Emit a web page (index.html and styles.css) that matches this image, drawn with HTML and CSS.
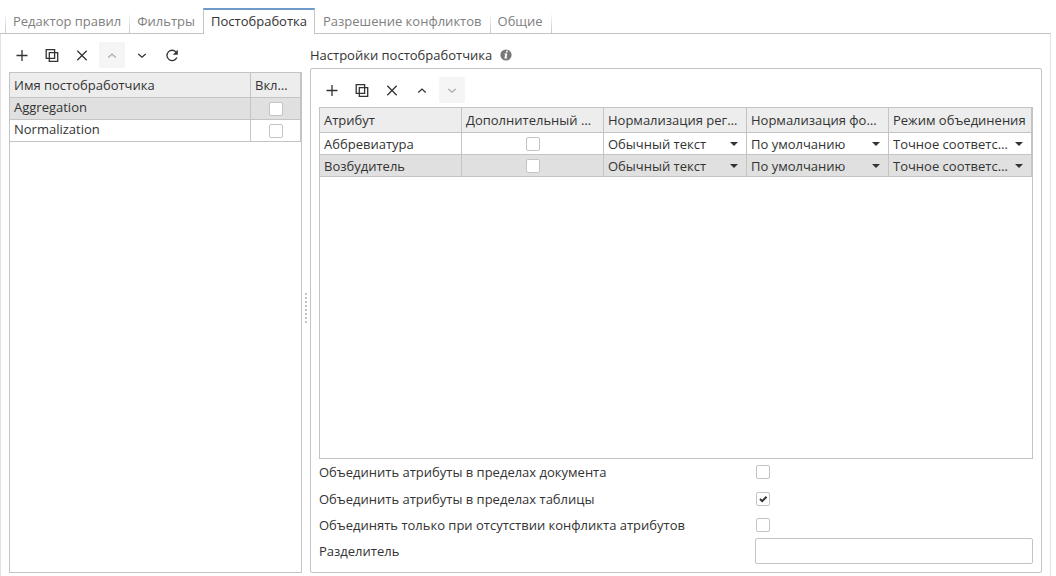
FILE: index.html
```html
<!DOCTYPE html>
<html lang="ru">
<head>
<meta charset="utf-8">
<title>Постобработка</title>
<link rel="stylesheet" href="styles.css">
</head>
<body>
<svg class="sprite" aria-hidden="true">
  <symbol id="plus" viewBox="0 0 16 16"><path d="M8 3v11M2.500 8.500h11"/></symbol>
  <symbol id="copy" viewBox="0 0 16 16"><path d="M2.200 2.700h8.400v8.600H2.200zM5.300 5.700h8.400v8.600H5.300z"/></symbol>
  <symbol id="cross" viewBox="0 0 16 16"><path d="M3.300 3.800l9.400 9.400M12.700 3.800l-9.400 9.400"/></symbol>
  <symbol id="up" viewBox="0 0 16 16"><path d="M4.300 10.400L8 7.100l3.700 3.300"/></symbol>
  <symbol id="down" viewBox="0 0 16 16"><path d="M4.300 6.900L8 10.200l3.700-3.300"/></symbol>
  <symbol id="refresh" viewBox="0 0 16 16"><path d="M12.900 10.600A5.200 5.200 0 1 1 12.300 5.300"/><path class="solid" d="M13.800 2.700v5.100H8.800z"/></symbol>
</svg>
<div class="page">
  <div class="tabs" role="tablist">
    <button class="tab" role="tab">Редактор правил</button>
    <button class="tab" role="tab">Фильтры</button>
    <button class="tab active" role="tab" aria-selected="true">Постобработка</button>
    <button class="tab" role="tab">Разрешение конфликтов</button>
    <button class="tab" role="tab">Общие</button>
  </div>
  <main class="panel">
    <section class="list">
      <div class="toolbar">
        <button class="tool" aria-label="Добавить"><svg><use href="#plus"/></svg></button>
        <button class="tool" aria-label="Копировать"><svg><use href="#copy"/></svg></button>
        <button class="tool" aria-label="Удалить"><svg><use href="#cross"/></svg></button>
        <button class="tool" aria-label="Вверх" disabled><svg><use href="#up"/></svg></button>
        <button class="tool" aria-label="Вниз"><svg><use href="#down"/></svg></button>
        <button class="tool" aria-label="Обновить"><svg><use href="#refresh"/></svg></button>
      </div>
      <div class="grid">
        <table>
          <colgroup><col><col class="col-flag"></colgroup>
          <thead><tr><th>Имя постобработчика</th><th>Включен</th></tr></thead>
          <tbody>
            <tr class="selected"><td class="raised">Aggregation</td><td class="check"><input type="checkbox" aria-label="Aggregation"></td></tr>
            <tr><td class="raised">Normalization</td><td class="check"><input type="checkbox" aria-label="Normalization"></td></tr>
          </tbody>
        </table>
      </div>
    </section>
    <div class="splitter" role="separator"><i></i></div>
    <section class="settings">
      <h2 class="title">Настройки постобработчика
        <svg class="info" viewBox="0 0 12 12"><circle cx="6" cy="6" r="5.600"/><path d="M6.200 1.800h1.600L7.500 3.400H5.900zM4.600 4.600h2.700L6.500 8.500h.8l-.2 1H4.400l.8-3.900h-.8z"/></svg>
      </h2>
      <div class="box">
        <div class="toolbar">
          <button class="tool" aria-label="Добавить"><svg><use href="#plus"/></svg></button>
          <button class="tool" aria-label="Копировать"><svg><use href="#copy"/></svg></button>
          <button class="tool" aria-label="Удалить"><svg><use href="#cross"/></svg></button>
          <button class="tool" aria-label="Вверх"><svg><use href="#up"/></svg></button>
          <button class="tool" aria-label="Вниз" disabled><svg><use href="#down"/></svg></button>
        </div>
        <div class="grid">
          <table>
            <colgroup><col class="col-a"><col class="col-a"><col class="col-b"><col class="col-a"><col class="col-b"></colgroup>
            <thead><tr><th>Атрибут</th><th class="roomy">Дополнительный атрибут</th><th>Нормализация регистра</th><th>Нормализация формы</th><th>Режим объединения</th></tr></thead>
            <tbody>
              <tr>
                <td>Аббревиатура</td>
                <td class="check"><input type="checkbox" aria-label="Дополнительный атрибут"></td>
                <td class="pick"><select aria-label="Нормализация регистра"><option>Обычный текст</option></select></td>
                <td class="pick"><select aria-label="Нормализация формы"><option>По умолчанию</option></select></td>
                <td class="pick"><select aria-label="Режим объединения"><option>Точное соответствие</option></select></td>
              </tr>
              <tr class="selected">
                <td>Возбудитель</td>
                <td class="check"><input type="checkbox" aria-label="Дополнительный атрибут"></td>
                <td class="pick"><select aria-label="Нормализация регистра"><option>Обычный текст</option></select></td>
                <td class="pick"><select aria-label="Нормализация формы"><option>По умолчанию</option></select></td>
                <td class="pick"><select aria-label="Режим объединения"><option>Точное соответствие</option></select></td>
              </tr>
            </tbody>
          </table>
        </div>
        <form class="form">
          <label for="doc">Объединить атрибуты в пределах документа</label><input type="checkbox" id="doc">
          <label for="tbl">Объединить атрибуты в пределах таблицы</label><input type="checkbox" id="tbl" checked>
          <label for="conf">Объединять только при отсутствии конфликта атрибутов</label><input type="checkbox" id="conf">
          <label for="sep">Разделитель</label><input type="text" id="sep">
        </form>
      </div>
    </section>
  </main>
</div>
</body>
</html>
```
FILE: styles.css
```css
* { box-sizing: border-box; }

body {
  margin: 0;
  background: #fff;
  color: #333;
  font: 13px/18px "Open Sans", "Noto Sans", sans-serif;
}

button, input, select { font: inherit; color: inherit; margin: 0; }

.sprite { position: absolute; width: 0; height: 0; }

.page {
  display: flex;
  flex-direction: column;
  height: 100vh;
  padding: 8px 5px 0 0;
}

/* Tabs */
.tabs {
  display: flex;
  height: 26px;
  padding-left: 5px;
  border-bottom: 1px solid #c4c4c4;
}
.tab {
  height: 25px;
  padding: 0 8px 0 7px;
  border: 0;
  border-left: 1px solid;
  border-image: linear-gradient(#fff 20%, #c4c4c4) 1;
  background: none;
  color: #808080;
}
.tab:last-child { border-right: 1px solid; }
.tab.active {
  height: 26px;
  padding: 0 7px 2px;
  border: solid #c4c4c4;
  border-width: 2px 1px 0;
  border-top-color: #6f9bcb;
  border-image: none;
  background: #fff;
  color: #333;
}
.tab.active + .tab { border-left: 0; padding-left: 8px; }

/* Panel */
.panel {
  flex: 1;
  min-height: 0;
  display: flex;
  padding: 8px 8px 3px;
  border: solid #e2e2e2;
  border-width: 0 1px;
}
.list {
  width: 293px;
  display: flex;
  flex-direction: column;
  gap: 4px;
}
.settings {
  flex: 1;
  min-width: 0;
  display: flex;
  flex-direction: column;
}
.title {
  display: flex;
  align-items: center;
  gap: 8px;
  height: 26px;
  margin: 0;
  font-size: 13px;
  font-weight: 400;
}
.info { width: 12px; height: 12px; }
.info circle { fill: #777; }
.info path { fill: #fff; }

.splitter {
  width: 8px;
  display: flex;
  align-items: center;
  justify-content: center;
}
.splitter i {
  width: 2px;
  height: 30px;
  background: repeating-linear-gradient(#c4c4c4 0 2px, transparent 2px 4px);
}

.box {
  flex: 1;
  min-height: 0;
  display: flex;
  flex-direction: column;
  padding: 8px;
  border: 1px solid #c4c4c4;
  border-radius: 2px;
}
.box .toolbar { margin-bottom: 4px; }

/* Toolbar */
.toolbar { display: flex; gap: 4px; }
.tool {
  width: 26px;
  height: 26px;
  padding: 5px;
  border: 0;
  background: none;
}
.tool svg {
  display: block;
  width: 16px;
  height: 16px;
  fill: none;
  stroke: #333;
  stroke-width: 1.3;
}
.solid { fill: #333; stroke: none; }
.tool:disabled { background: #f5f5f5; border-radius: 2px; }
.tool:disabled svg { stroke: #aaa; }

/* Grids */
.grid {
  flex: 1;
  min-height: 0;
  border: 1px solid #c4c4c4;
}
table {
  width: 100%;
  table-layout: fixed;
  border-collapse: separate;
  border-spacing: 0;
}
.col-flag { width: 50px; }
.col-a { width: 142px; }
.col-b { width: 143px; }
th, td {
  height: 22px;
  padding: 0 4px;
  border: solid #c4c4c4;
  border-width: 0 1px 1px 0;
  text-align: left;
  font-weight: 400;
  line-height: 18px;
  white-space: nowrap;
  overflow: hidden;
  text-overflow: ellipsis;
}
th { height: 25px; background: #ededed; }
th.roomy { padding-right: 8px; }
.selected td { background: #e0e0e0; }
td.raised { padding-bottom: 3px; }
td.check { padding: 0; text-align: center; }
td.check input { display: block; margin: 0 auto; }
td.pick { position: relative; padding: 0; }
td.pick::after {
  content: "";
  position: absolute;
  right: 8px;
  top: 9px;
  border: 4px solid transparent;
  border-top-color: #333;
  border-bottom: 0;
  pointer-events: none;
}
select {
  display: block;
  appearance: none;
  width: 100%;
  height: 21px;
  padding: 0 20px 0 4px;
  border: 0;
  background: transparent;
  text-overflow: ellipsis;
  overflow: hidden;
}

/* Fields */
input[type="checkbox"] {
  appearance: none;
  width: 14px;
  height: 14px;
  border: 1px solid #c4c4c4;
  border-radius: 2px;
  background: #fff;
}
input[type="checkbox"]:checked {
  background: #fff url("data:image/svg+xml,%3Csvg xmlns='http://www.w3.org/2000/svg' viewBox='0 0 12 12'%3E%3Cpath d='M3 6l2.200 2.200L9.500 3.800' fill='none' stroke='%23333' stroke-width='2'/%3E%3C/svg%3E") center / 12px 12px no-repeat;
}
.form {
  display: grid;
  grid-template-columns: 436fr 278fr;
  grid-template-rows: 26px 27px 26px 26px;
  align-items: center;
}
.form input[type="checkbox"] { margin-left: 1px; }
.form input[type="text"] {
  width: 100%;
  height: 26px;
  padding: 0 6px;
  border: 1px solid #c4c4c4;
  border-radius: 2px;
}
```
